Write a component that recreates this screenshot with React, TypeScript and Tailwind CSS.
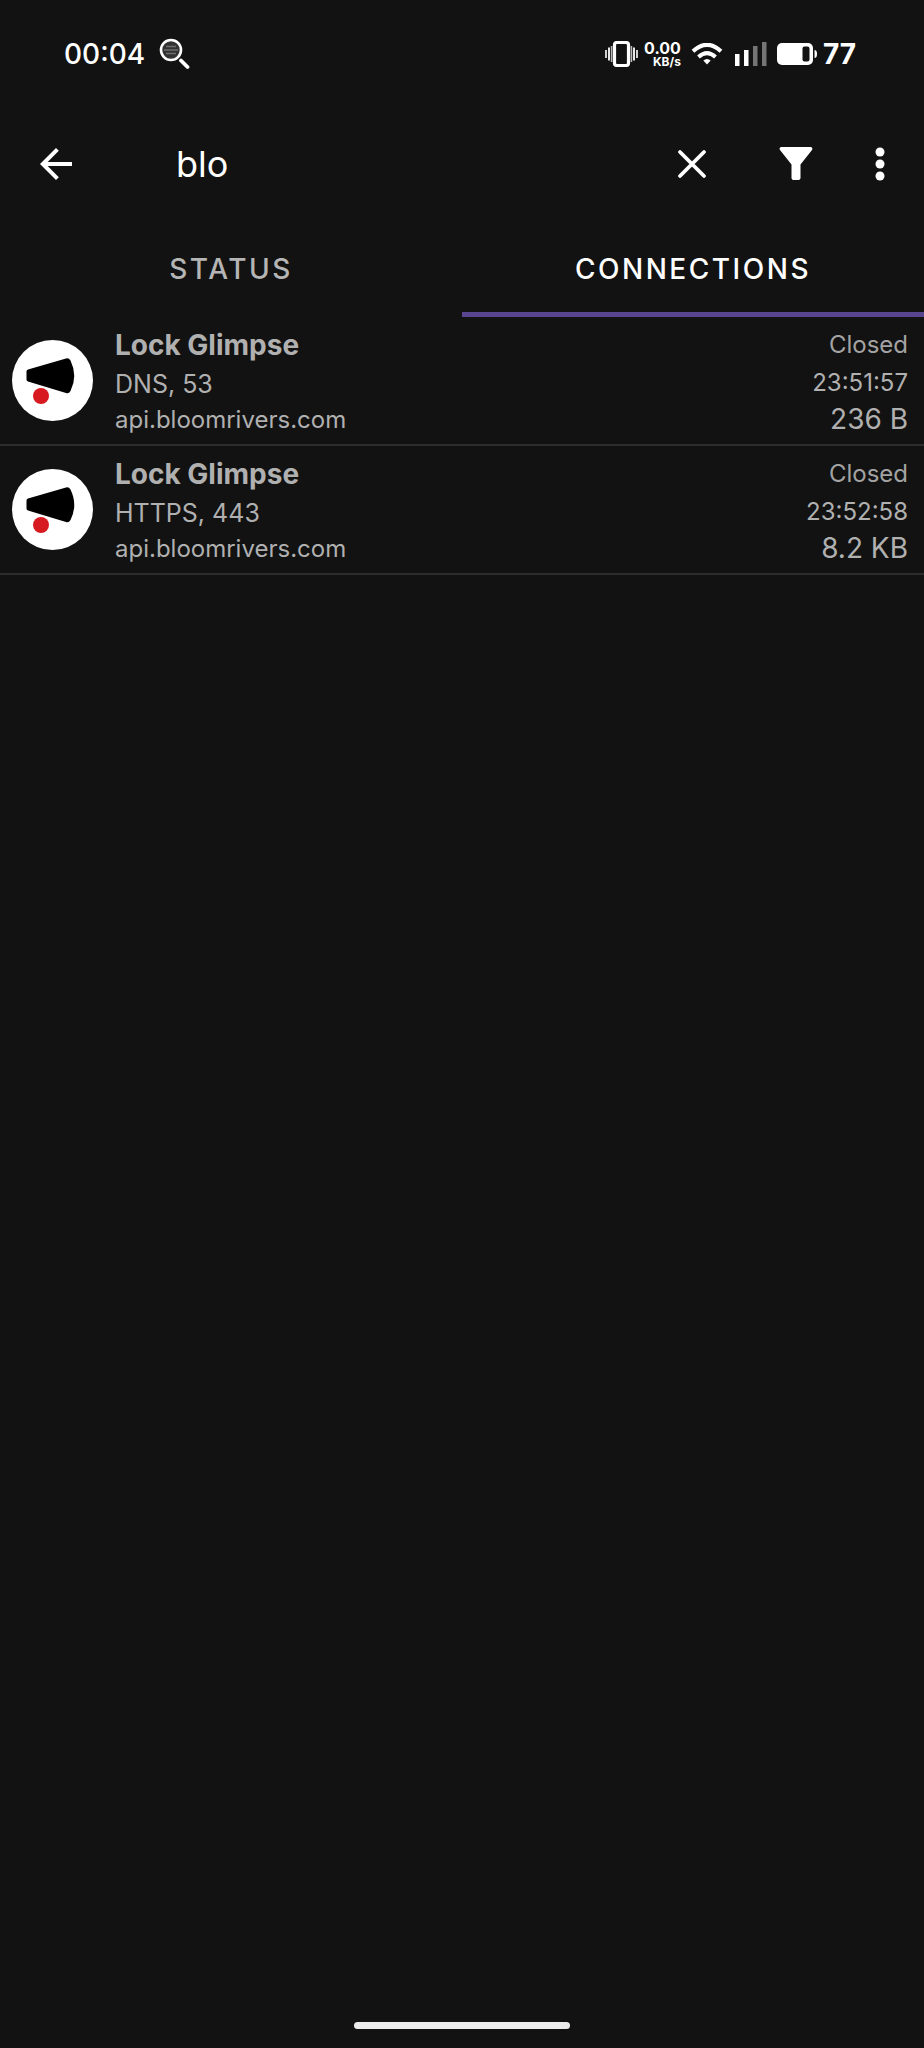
import React, { useState } from 'react';

const connections = [
  { id: 1, app: 'Lock Glimpse', proto: 'DNS, 53', host: 'api.bloomrivers.com', state: 'Closed', time: '23:51:57', size: '236 B' },
  { id: 2, app: 'Lock Glimpse', proto: 'HTTPS, 443', host: 'api.bloomrivers.com', state: 'Closed', time: '23:52:58', size: '8.2 KB' },
];

const StatusBar = () => {
  return (
    <div className="flex h-[108px] items-center justify-between pl-16 pr-[68px] text-[28px] leading-8">
      <div className="flex items-center gap-3.5">
        <span className="font-medium">00:04</span>
        <svg width="31" height="32" viewBox="0 0 31 32" fill="none">
          <circle cx="12" cy="12" r="10" fill="#333" stroke="#fff" strokeWidth="2.6" />
          <path d="M7 8.5h10M5 12h14M7 15.500h10" stroke="#6e6e6e" strokeWidth="1.4" />
          <path d="M22 22.500l6.500 6.500" stroke="#fff" strokeWidth="3.8" strokeLinecap="round" />
        </svg>
      </div>

      <div className="flex items-center gap-1.5">
        {/* Vibrate */}
        <svg width="33" height="26" viewBox="0 0 33 26" fill="none">
          <rect x="9.5" y="1.5" width="14" height="23" rx="2.500" stroke="#fff" strokeWidth="3.2" />
          <path d="M1 9v8M32 9v8" stroke="#fff" strokeWidth="1.6" />
          <path d="M4 6.500v13M29 6.500v13" stroke="#fff" strokeWidth="1.8" />
          <path d="M6.600 5v16M26.400 5v16" stroke="#bbb" strokeWidth="1.6" />
        </svg>
        <div className="flex flex-col items-end font-bold">
          <span className="text-[16px] leading-4">0.00</span>
          <span className="text-[12px] leading-3">KB/s</span>
        </div>
        {/* Wifi */}
        <svg className="ml-1" width="32" height="22" viewBox="0 0 32 22" fill="none">
          <path d="M2 8.2Q16-4.600 30 8.200M7.500 14Q16 6.200 24.500 14" stroke="#fff" strokeWidth="4" />
          <path d="M12.300 17.600Q16 14.600 19.700 17.600L16 21.600z" fill="#fff" />
        </svg>
        {/* Signal */}
        <svg className="ml-1.5" width="32" height="24" viewBox="0 0 32 24">
          <path d="M0 12h4.500v12H0zM9 8h4.500v16H9z" fill="#fff" />
          <path d="M18 4h4.500v20H18zM27 0h4.500v24H27z" fill="#757575" />
        </svg>
        {/* Battery */}
        <svg className="ml-1" width="40" height="22" viewBox="0 0 40 22">
          <rect width="36" height="22" rx="5" fill="#fff" />
          <rect x="25.500" y="3.500" width="7" height="15" rx="2" fill="#121212" />
          <path d="M37.500 7q2.500 0 2.500 4t-2.500 4z" fill="#fff" />
        </svg>
        <span className="font-bold">77</span>
      </div>
    </div>
  );
};

const SearchBar = () => {
  const [query, setQuery] = useState('blo');

  return (
    <header className="flex h-28 items-center pl-8 pr-5">
      <button type="button" aria-label="Back" className="shrink-0">
        <svg width="48" height="48" viewBox="0 0 24 24" fill="#fff">
          <path d="M20 11H7.830l5.590-5.590L12 4l-8 8 8 8 1.410-1.410L7.830 13H20v-2z" />
        </svg>
      </button>
      <input
        type="text"
        aria-label="Search"
        value={query}
        onChange={(e) => setQuery(e.target.value)}
        className="ml-24 h-14 min-w-0 flex-1 bg-transparent text-[36px] outline-none"
      />
      <button type="button" aria-label="Clear" className="shrink-0" onClick={() => setQuery('')}>
        <svg width="48" height="48" viewBox="0 0 48 48" fill="none" stroke="#fff" strokeWidth="3.8" strokeLinecap="round">
          <path d="M12 12l24 24M36 12L12 36" />
        </svg>
      </button>
      <button type="button" aria-label="Filter" className="ml-14 shrink-0">
        <svg width="48" height="48" viewBox="0 0 48 48" fill="#fff">
          <path d="M9.500 7h29c1.700 0 2.500 1.700 1.500 3L28.500 24.500V38c0 1.100-.9 2-2 2h-5c-1.100 0-2-.9-2-2V24.500L8 10c-1-1.300-.2-3 1.500-3z" />
        </svg>
      </button>
      <button type="button" aria-label="More options" className="ml-9 shrink-0">
        <svg width="48" height="48" viewBox="0 0 48 48" fill="#fff">
          <circle cx="24" cy="12" r="4.5" />
          <circle cx="24" cy="24" r="4.5" />
          <circle cx="24" cy="36" r="4.5" />
        </svg>
      </button>
    </header>
  );
};

const Tabs = () => {
  return (
    <div role="tablist" className="grid h-[97px] grid-cols-2 text-[28px] font-medium tracking-[0.09em]">
      <button type="button" role="tab" aria-selected="false" className="text-[#b5b5b5]">
        STATUS
      </button>
      <button type="button" role="tab" aria-selected="true" className="border-b-[5px] border-[#5a4590] pt-[5px]">
        CONNECTIONS
      </button>
    </div>
  );
};

const AppIcon = () => {
  return (
    <svg className="shrink-0" width="81" height="81" viewBox="0 0 81 81">
      <circle cx="40.5" cy="40.5" r="40.5" fill="#fff" />
      <path
        d="M16 29.500L54 18.500Q57 17.800 58.500 20.500Q66 36 58.500 51Q57 53.800 54 53L16 41.500Q14.500 41 14.500 39.500V31.500Q14.500 30 16 29.500z"
        fill="#000"
      />
      <circle cx="29" cy="56" r="8" fill="#d71920" />
    </svg>
  );
};

const App = () => {
  return (
    <div className="flex min-h-screen flex-col bg-[#121212] font-['Inter',sans-serif] text-white">
      <StatusBar />
      <SearchBar />
      <Tabs />

      <ul className="flex-1 text-[#b0b0b0]">
        {connections.map((c) => (
          <li key={c.id} className="flex h-[129px] items-center border-b-2 border-[#2d2d2d] pl-3 pr-4">
            <AppIcon />
            <div className="ml-[22px] min-w-0 flex-1">
              <p className="text-[28px] font-bold leading-[42px]">{c.app}</p>
              <p className="text-[25px] leading-9">{c.proto}</p>
              <p className="text-[24px] leading-9">{c.host}</p>
            </div>
            <div className="text-right">
              <p className="text-[24px] leading-9 text-[#a3a3a3]">{c.state}</p>
              <p className="text-[24px] leading-10">{c.time}</p>
              <p className="text-[28px] leading-8">{c.size}</p>
            </div>
          </li>
        ))}
      </ul>

      {/* Gesture bar */}
      <div className="flex justify-center pb-[19px]">
        <div className="h-[7px] w-[216px] rounded-full bg-[#ececec]" />
      </div>
    </div>
  );
};

export default App;
